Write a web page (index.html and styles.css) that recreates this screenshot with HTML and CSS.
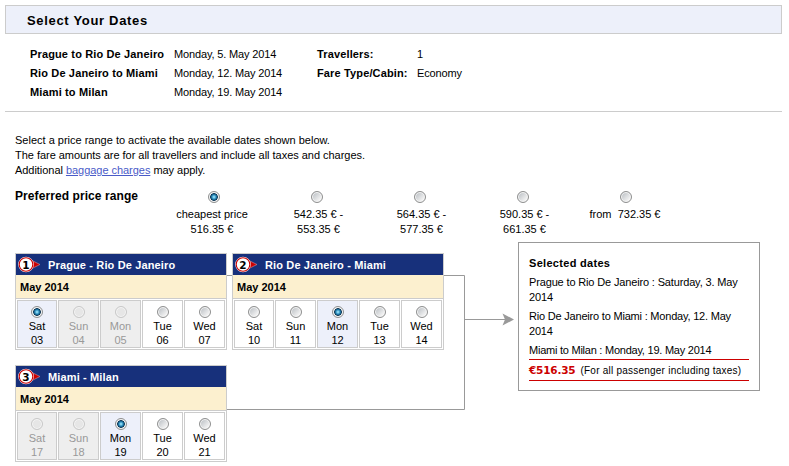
FILE: index.html
```html
<!DOCTYPE html>
<html lang="en">
<head>
  <meta charset="UTF-8">
  <meta name="viewport" content="width=device-width, initial-scale=1.0">
  <title>Select Your Dates</title>
  <link rel="stylesheet" href="styles.css">
</head>
<body>

  <h1 class="page-title">Select Your Dates</h1>

  <div class="trip-info">
    <div class="info-col routes">
      <b>Prague to Rio De Janeiro</b><span>Monday, 5. May 2014</span>
      <b>Rio De Janeiro to Miami</b><span>Monday, 12. May 2014</span>
      <b>Miami to Milan</b><span>Monday, 19. May 2014</span>
    </div>
    <div class="info-col details">
      <b>Travellers:</b><span>1</span>
      <b>Fare Type/Cabin:</b><span>Economy</span>
    </div>
  </div>

  <div class="intro">
    <p>Select a price range to activate the available dates shown below.</p>
    <p class="fare-note">The fare amounts are for all travellers and include all taxes and charges.</p>
    <p class="baggage-note">Additional <a href="#">baggage charges</a> may apply.</p>
  </div>

  <div class="price-range">
    <h2>Preferred price range</h2>
    <label class="first"><input type="radio" name="price" checked><span>cheapest price<br>516.35 €</span></label>
    <label><input type="radio" name="price"><span>542.35 € -<br>553.35 €</span></label>
    <label><input type="radio" name="price"><span>564.35 € -<br>577.35 €</span></label>
    <label><input type="radio" name="price"><span>590.35 € -<br>661.35 €</span></label>
    <label class="last"><input type="radio" name="price"><span>from &nbsp;732.35 €</span></label>
  </div>

  <div class="planner">
    <!-- lines joining the calendars to the summary -->
    <svg class="connector" width="500" height="150" viewBox="0 0 500 150" fill="none" stroke="#999">
      <path d="M0 10.5H249.500V144.500H0M249.500 54.500H292"/>
      <path d="M287.500 48.500L299 54.500L287.500 60.500L290 54.500Z" fill="#999" stroke="none"/>
    </svg>

    <div class="calendars">
      <div class="calendar">
        <div class="cal-head">
          <svg class="marker" width="26" height="17" viewBox="0 0 26 17">
            <path d="M15 4.500L23 8.500L15 12.500Z" fill="#c00" stroke="#d9a5b5" stroke-width="0.500"/>
            <circle cx="9" cy="8.500" r="7.800" fill="#fff"/>
            <circle cx="9" cy="8.500" r="6.800" fill="#fff" stroke="#c00" stroke-width="1.100"/>
            <text x="9" y="12.500" text-anchor="middle">1</text>
          </svg>
          <h3>Prague - Rio De Janeiro</h3>
        </div>
        <div class="month">May 2014</div>
        <div class="days">
          <label class="day selected"><input type="radio" name="leg1" checked>Sat<br>03</label>
          <label class="day disabled"><input type="radio" name="leg1" disabled>Sun<br>04</label>
          <label class="day disabled"><input type="radio" name="leg1" disabled>Mon<br>05</label>
          <label class="day"><input type="radio" name="leg1">Tue<br>06</label>
          <label class="day"><input type="radio" name="leg1">Wed<br>07</label>
        </div>
      </div>

      <div class="calendar">
        <div class="cal-head">
          <svg class="marker" width="26" height="17" viewBox="0 0 26 17">
            <path d="M15 4.500L23 8.500L15 12.500Z" fill="#c00" stroke="#d9a5b5" stroke-width="0.500"/>
            <circle cx="9" cy="8.500" r="7.800" fill="#fff"/>
            <circle cx="9" cy="8.500" r="6.800" fill="#fff" stroke="#c00" stroke-width="1.100"/>
            <text x="9" y="12.500" text-anchor="middle">2</text>
          </svg>
          <h3>Rio De Janeiro - Miami</h3>
        </div>
        <div class="month">May 2014</div>
        <div class="days">
          <label class="day"><input type="radio" name="leg2">Sat<br>10</label>
          <label class="day"><input type="radio" name="leg2">Sun<br>11</label>
          <label class="day selected"><input type="radio" name="leg2" checked>Mon<br>12</label>
          <label class="day"><input type="radio" name="leg2">Tue<br>13</label>
          <label class="day"><input type="radio" name="leg2">Wed<br>14</label>
        </div>
      </div>

      <div class="calendar">
        <div class="cal-head">
          <svg class="marker" width="26" height="17" viewBox="0 0 26 17">
            <path d="M15 4.500L23 8.500L15 12.500Z" fill="#c00" stroke="#d9a5b5" stroke-width="0.500"/>
            <circle cx="9" cy="8.500" r="7.800" fill="#fff"/>
            <circle cx="9" cy="8.500" r="6.800" fill="#fff" stroke="#c00" stroke-width="1.100"/>
            <text x="9" y="12.500" text-anchor="middle">3</text>
          </svg>
          <h3>Miami - Milan</h3>
        </div>
        <div class="month">May 2014</div>
        <div class="days">
          <label class="day disabled"><input type="radio" name="leg3" disabled>Sat<br>17</label>
          <label class="day disabled"><input type="radio" name="leg3" disabled>Sun<br>18</label>
          <label class="day selected"><input type="radio" name="leg3" checked>Mon<br>19</label>
          <label class="day"><input type="radio" name="leg3">Tue<br>20</label>
          <label class="day"><input type="radio" name="leg3">Wed<br>21</label>
        </div>
      </div>
    </div>

    <div class="summary">
      <h3>Selected dates</h3>
      <p>Prague to Rio De Janeiro : Saturday, 3. May<br>2014</p>
      <p>Rio De Janeiro to Miami : Monday, 12. May<br>2014</p>
      <p>Miami to Milan : Monday, 19. May 2014</p>
      <div class="total"><b>€516.35</b><span>(For all passenger including taxes)</span></div>
    </div>
  </div>

</body>
</html>
```

FILE: styles.css
```css
* {
  margin: 0;
  padding: 0;
  box-sizing: border-box;
}

body {
  width: 789px;
  height: 466px;
  padding: 5px 7px 0 5px;
  overflow: hidden;
  background: #fff;
  color: #000;
  font-family: "Liberation Sans", Arial, sans-serif;
  font-size: 11px;
  line-height: 15px;
}

.page-title {
  height: 29px;
  padding-left: 21px;
  border: 1px solid #ccc;
  background: #edf0fa;
  font-size: 13px;
  line-height: 29px;
  letter-spacing: 0.68px;
}

.trip-info {
  display: flex;
  height: 78px;
  padding: 11px 0 0 25px;
  border-bottom: 1px solid #ccc;
}

.info-col {
  display: grid;
  grid-auto-rows: 19px;
  align-content: start;
  line-height: 19px;
}

.info-col b {
  letter-spacing: 0.14px;
}

.info-col span {
  letter-spacing: -0.15px;
}

.routes {
  grid-template-columns: 144px 143px;
}

.details {
  grid-template-columns: 100px 60px;
}

.intro {
  padding: 21px 0 0 10px;
}

.fare-note {
  letter-spacing: -0.03px;
}

.baggage-note {
  letter-spacing: -0.04px;
}

.intro a {
  color: #4a5bc8;
}

.price-range {
  display: flex;
  padding: 10px 0 0 10px;
}

.price-range h2 {
  width: 147px;
  font-size: 12px;
  line-height: 16px;
  letter-spacing: 0.08px;
}

.price-range label {
  width: 103px;
  padding-top: 3px;
  text-align: center;
}

.price-range label input[type="radio"] {
  margin-bottom: 4px;
}

.price-range span {
  display: block;
  padding-left: 4px;
}

.price-range .first span {
  padding: 0 3px 0 0;
}

.price-range .last span {
  padding: 0 1px 0 0;
}

input[type="radio"] {
  appearance: none;
  display: block;
  width: 12px;
  height: 12px;
  margin: 0 auto 3px;
  border: 1px solid #8e8f8f;
  border-radius: 50%;
  background: linear-gradient(135deg, #c4c8cc 20%, #f4f4f4 80%);
  box-shadow: inset 0 0 0 1px #f6f6f6;
}

input[type="radio"]:checked {
  background: radial-gradient(circle 5px at 50% 50%, #8fdcf5 10%, #2283b5 45%, #0c3350 72%, #e8ebee 84%);
}

input[type="radio"]:disabled {
  border-color: #c8c8c8;
  background: #e6e6e6;
}

.planner {
  position: relative;
  display: flex;
  padding-left: 10px;
}

.connector {
  position: absolute;
  left: 210px;
  top: 28px;
}

.calendars {
  position: relative;
  display: flex;
  flex-wrap: wrap;
  align-content: flex-start;
  gap: 15px 5px;
  width: 429px;
  margin-top: 16px;
}

.calendar {
  width: 212px;
  height: 97px;
  border: 1px solid #ccc;
  background: #fff;
}

.cal-head {
  display: flex;
  align-items: center;
  height: 21px;
  padding-left: 1px;
  background: #17307b;
  color: #fff;
}

.cal-head h3 {
  margin-left: 5px;
  font-size: 11px;
  line-height: 22px;
  letter-spacing: 0.14px;
}

.marker text {
  fill: #000;
  font-family: "DejaVu Sans", sans-serif;
  font-size: 10.5px;
  font-weight: bold;
}

.month {
  height: 24px;
  padding-left: 4px;
  border-bottom: 1px solid #ccc;
  background: #fcf0cf;
  font-weight: bold;
  line-height: 25px;
}

.days {
  display: grid;
  grid-template-columns: 40px repeat(4, 41px);
  gap: 1px;
  padding: 1px;
}

.day {
  height: 48px;
  padding-top: 5px;
  border: 1px solid #ccc;
  text-align: center;
  line-height: 14px;
}

.day input[type="radio"] {
  margin-bottom: 1px;
}

.day.selected {
  background: #edf0fa;
}

.day.disabled {
  background: #eee;
  color: #999;
}

.summary {
  width: 242px;
  height: 149px;
  margin: 5px 0 0 74px;
  padding: 13px 10px 0;
  border: 1px solid #999;
}

.summary h3 {
  margin-bottom: 4px;
  font-size: 11px;
  letter-spacing: 0.3px;
}

.summary p {
  margin-bottom: 4px;
  letter-spacing: -0.2px;
}

.summary p:first-of-type {
  letter-spacing: -0.15px;
}

.summary p:last-of-type {
  margin-bottom: 0;
  letter-spacing: -0.24px;
}

.total {
  display: flex;
  height: 22px;
  margin-top: 1px;
  border-top: 1px solid #c00;
  border-bottom: 1px solid #c00;
  line-height: 21px;
}

.total b {
  margin-right: 5px;
  color: #c00;
  font-family: "DejaVu Sans", sans-serif;
  font-size: 10.5px;
  letter-spacing: -0.2px;
}

.total span {
  font-size: 10px;
  letter-spacing: 0.23px;
}
```
